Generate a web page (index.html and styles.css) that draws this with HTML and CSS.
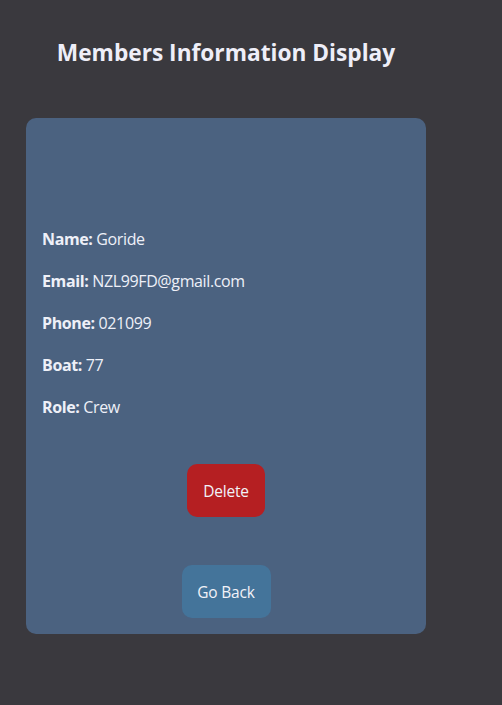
FILE: index.html
```html
<!DOCTYPE html>
<html>
<head>
<meta charset="utf-8">
<link rel="stylesheet" href="styles.css">
</head>
<body>
<div class="page">
  <h1 class="title">Members Information Display</h1>
  <div class="card">
    <div class="info">
      <p class="row"><strong>Name:</strong> Goride</p>
      <p class="row"><strong>Email:</strong> NZL99FD@gmail.com</p>
      <p class="row"><strong>Phone:</strong> 021099</p>
      <p class="row"><strong>Boat:</strong> 77</p>
      <p class="row"><strong>Role:</strong> Crew</p>
    </div>
    <button class="btn btn-delete">Delete</button>
    <button class="btn btn-back">Go Back</button>
  </div>
</div>
</body>
</html>
```
FILE: styles.css
```css
html, body {
  margin: 0;
  padding: 0;
  background: #3a393e;
  height: 100%;
}
body {
  font-family: "Open Sans", "Noto Sans", sans-serif;
  color: #eef0f8;
}
.page {
  width: 400px;
  margin-left: 26px;
  padding-top: 37px;
  display: flex;
  flex-direction: column;
}
.title {
  margin: 0;
  text-align: center;
  font-size: 22.7px;
  line-height: 32px;
  font-weight: 700;
  color: #eeeef8;
}
.card {
  margin-top: 49px;
  background: #4b6280;
  border-radius: 10px;
  padding: 108px 16px 16px;
  display: flex;
  flex-direction: column;
  align-items: center;
}
.info {
  align-self: stretch;
  display: flex;
  flex-direction: column;
  gap: 16px;
}
.row {
  margin: 0;
  font-size: 16px;
  line-height: 26px;
  letter-spacing: -0.37px;
}
.row strong {
  font-weight: 700;
}
.btn {
  font-family: inherit;
  font-size: 15.5px;
  letter-spacing: -0.2px;
  color: #f2f2f8;
  border: none;
  border-radius: 10px;
  height: 53px;
  padding: 0;
  cursor: pointer;
}
.btn-delete {
  margin-top: 44px;
  background: #b51f22;
  width: 78px;
}
.btn-back {
  margin-top: 48px;
  background: #44749a;
  width: 89px;
}
```
